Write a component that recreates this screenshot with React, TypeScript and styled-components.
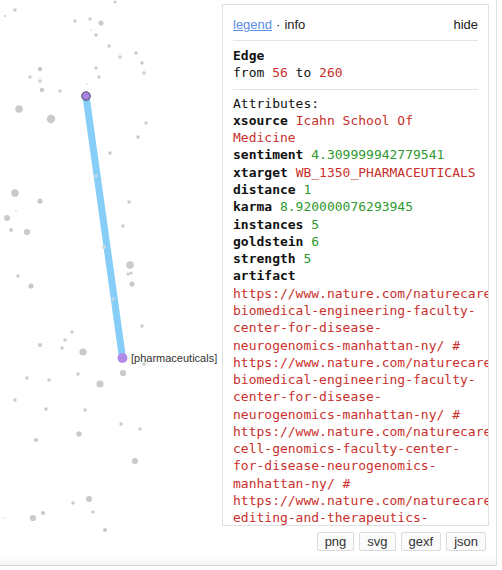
import React from 'react';
import styled, { createGlobalStyle } from 'styled-components';

const GlobalStyle = createGlobalStyle`
  html, body {
    margin: 0;
    padding: 0;
    background: #fff;
  }
  body {
    font-family: "Liberation Sans", Arial, sans-serif;
  }
`;

const Stage = styled.div`
  position: relative;
  width: 497px;
  height: 566px;
  box-sizing: border-box;
  border-right: 1px solid #e2e2e2;
  border-bottom: 1px solid #d6d6d6;
  box-shadow: inset 0 -9px 9px -7px rgba(0, 0, 0, 0.07);
  overflow: hidden;
`;

const Graph = styled.svg`
  display: block;
`;

const NodeLabel = styled.text`
  font-family: "Liberation Sans", Arial, sans-serif;
  font-size: 11px;
  fill: #333;
`;

const Sidebar = styled.div`
  position: absolute;
  top: 4px;
  right: 7px;
  width: 267px;
  display: flex;
  flex-direction: column;
  gap: 6px;
`;

const Panel = styled.div`
  height: 522px;
  box-sizing: border-box;
  padding: 10px;
  background: #fff;
  border: 1px solid #e0e0e0;
  overflow: hidden;
`;

const Header = styled.div`
  display: flex;
  justify-content: space-between;
  align-items: center;
  font-size: 13px;
  line-height: 20px;
  color: #222;
  padding-bottom: 5px;
  border-bottom: 1px solid #e4e4e4;
`;

const Tabs = styled.div`
  display: flex;
  gap: 4px;
`;

const TabLink = styled.a`
  color: #5a8de8;
  text-decoration: underline;
  cursor: pointer;
`;

const Plain = styled.span`
  cursor: pointer;
`;

const Section = styled.div<{ $top: number; $bottom: number; $rule?: boolean }>`
  font-family: "DejaVu Sans Mono", "Liberation Mono", monospace;
  font-size: 13px;
  line-height: 1.33;
  color: #111;
  padding: ${(p) => p.$top}px 0 ${(p) => p.$bottom}px;
  border-bottom: ${(p) => (p.$rule ? '1px solid #e4e4e4' : 'none')};
`;

const Title = styled.div`
  font-weight: bold;
`;

const Line = styled.div``;

const Key = styled.span`
  font-weight: bold;
`;

const Value = styled.span<{ $kind: 'str' | 'num' }>`
  color: ${(p) => (p.$kind === 'num' ? '#2f9a2f' : '#c9302c')};
`;

const LongValue = styled.div`
  color: #c9302c;
`;

const ButtonRow = styled.div`
  display: flex;
  justify-content: flex-end;
  gap: 5px;
  padding-right: 3px;
`;

const ExportButton = styled.button`
  font-family: "Liberation Sans", Arial, sans-serif;
  font-size: 13px;
  line-height: 17px;
  color: #333;
  background: #fbfbfb;
  border: 1px solid #dcdcdc;
  border-radius: 2px;
  padding: 0 7px;
  cursor: pointer;
`;

// [x, y, r]
const dots: [number, number, number][] = [
  [115, 2, 1.5], [15, 10, 1.7], [5, 16, 1], [75, 21, 1.7], [90, 19, 1.7], [101, 23, 2.6],
  [91, 30, 0.7], [96, 35, 1.7], [109, 46, 1.7], [120, 57, 1.7], [136, 53, 1.7], [142, 63, 1.7],
  [144, 73, 1.7], [40, 69, 2.2], [30, 77, 1.7], [40, 81, 1.7], [96, 68, 1.7], [99, 77, 1.7],
  [87, 84, 0.7], [42, 90, 2.2], [60, 91, 1.7], [19, 109, 3.8], [51, 119, 4.2], [146, 123, 1.7],
  [138, 137, 1.7], [110, 153, 1.7], [15, 193, 3.8], [40, 201, 2.6], [16, 211, 0.8],
  [7, 218, 3], [11, 230, 1.9], [27, 232, 3.1], [129, 202, 1.7], [123, 226, 1.7],
  [130, 265, 3.8], [128, 274, 1.6], [131, 273, 1.6], [132, 284, 2.6], [18, 276, 1.7], [31, 286, 2.6],
  [142, 326, 1.7], [72, 332, 1.7], [65, 340, 1.7], [40, 345, 2.1], [62, 348, 1.7], [83, 352, 3.6],
  [144, 364, 1.7], [123, 373, 3.1], [27, 378, 1.7], [49, 380, 1.7], [78, 374, 1.7], [100, 384, 3.6],
  [15, 400, 1.7], [46, 409, 1.7], [85, 410, 1.7], [121, 424, 1.7], [140, 429, 1.7], [79, 434, 2.7],
  [36, 440, 2.1], [135, 461, 3.1], [89, 499, 3.1], [73, 503, 1.7], [43, 513, 2.1], [33, 518, 3.1],
  [93, 512, 1.7], [105, 530, 2.1], [4, 518, 0.7],
];

const onEdge: [number, number, number][] = [
  [96, 176, 1.7], [104, 247, 2], [113, 299, 1.7],
];

const urls = [
  'https://www.nature.com/naturecareers/job/12803590/facultyopening-biomedical-engineering-faculty-center-for-disease-neurogenomics-manhattan-ny/',
  'https://www.nature.com/naturecareers/job/12803591/facultyopening-biomedical-engineering-faculty-center-for-disease-neurogenomics-manhattan-ny/',
  'https://www.nature.com/naturecareers/job/12803592/facultyopening-cell-genomics-faculty-center-for-disease-neurogenomics-manhattan-ny/',
  'https://www.nature.com/naturecareers/job/12803593/facultyopening-editing-and-therapeutics-faculty-center-for-disease-neurogenomics-manhattan-ny/',
];

const attributes: { key: string; value: string; kind: 'str' | 'num' }[] = [
  { key: 'xsource', value: 'Icahn School Of Medicine', kind: 'str' },
  { key: 'sentiment', value: '4.309999942779541', kind: 'num' },
  { key: 'xtarget', value: 'WB_1350_PHARMACEUTICALS', kind: 'str' },
  { key: 'distance', value: '1', kind: 'num' },
  { key: 'karma', value: '8.920000076293945', kind: 'num' },
  { key: 'instances', value: '5', kind: 'num' },
  { key: 'goldstein', value: '6', kind: 'num' },
  { key: 'strength', value: '5', kind: 'num' },
];

const App: React.FC = () => {
  return (
    <>
      <GlobalStyle />
      <Stage>
        <Graph width={497} height={566}>
          {dots.map(([x, y, r], i) => (
            <circle key={i} cx={x} cy={y} r={r} fill="#cacaca" />
          ))}
          <line x1={86} y1={96} x2={122.5} y2={358} stroke="#86cdf8" strokeWidth={7} />
          {onEdge.map(([x, y, r], i) => (
            <circle key={'e' + i} cx={x} cy={y} r={r} fill="#c8d8e2" />
          ))}
          <circle cx={86} cy={96} r={4.3} fill="#a883e3" stroke="#4a4a5a" strokeWidth={1} />
          <circle cx={122.5} cy={358} r={5} fill="#b08ae6" />
          <NodeLabel x={131} y={362}>[pharmaceuticals]</NodeLabel>
        </Graph>

        <Sidebar>
          <Panel>
            <Header>
              <Tabs>
                <TabLink>legend</TabLink>
                <span>·</span>
                <Plain>info</Plain>
              </Tabs>
              <Plain>hide</Plain>
            </Header>
            <Section $top={6} $bottom={7} $rule>
              <Title>Edge</Title>
              <Line>
                from <Value $kind="str">56</Value> to <Value $kind="str">260</Value>
              </Line>
            </Section>
            <Section $top={5} $bottom={0}>
              <Line>Attributes:</Line>
              {attributes.map((a) => (
                <Line key={a.key}>
                  <Key>{a.key}</Key> <Value $kind={a.kind}>{a.value}</Value>
                </Line>
              ))}
              <Line>
                <Key>artifact</Key>
              </Line>
              <LongValue>{urls.join(' # ')}</LongValue>
            </Section>
          </Panel>
          <ButtonRow>
            <ExportButton>png</ExportButton>
            <ExportButton>svg</ExportButton>
            <ExportButton>gexf</ExportButton>
            <ExportButton>json</ExportButton>
          </ButtonRow>
        </Sidebar>
      </Stage>
    </>
  );
};

export default App;
